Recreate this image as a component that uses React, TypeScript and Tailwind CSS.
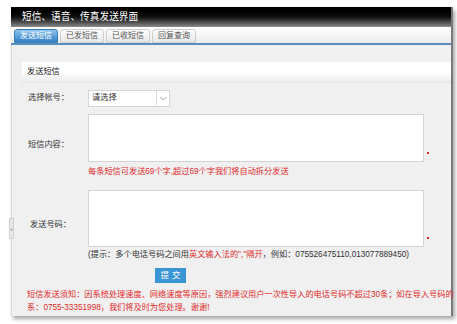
import React from 'react';

const FONT = "font-['Liberation_Sans','Noto_Sans_CJK_SC',sans-serif]";

const tabs = ['发送短信', '已发短信', '已收短信', '回复查询'];

const App: React.FC = () => {
  return (
    <div className={`w-[457px] h-[324px] bg-white pt-[7px] pl-[11px] overflow-hidden ${FONT}`}>
      <div className="relative w-[442px] h-[309px] border-r-2 border-[#7a7a7a] shadow-[2px_3px_4px_rgba(0,0,0,0.35)]">
        {/* Title bar */}
        <div className="h-[20px] bg-gradient-to-b from-black via-[#111] to-[#8c8c8c] text-white text-[9.7px] leading-none flex items-center pl-[11px]">
          短信、语音、传真发送界面
        </div>

        {/* Tabs */}
        <div className="h-[18px] flex items-end gap-[2px] pl-[3px] bg-gradient-to-b from-white to-[#ececec] border-b-2 border-[#5a8ebd]">
          {tabs.map((t, i) => (
            <div
              key={t}
              className={
                i === 0
                  ? 'w-[44px] h-[14px] rounded-t-[3px] bg-gradient-to-b from-[#8cc4ee] to-[#2f7fc4] text-white text-[8px] flex items-center justify-center border border-[#3b7fb8]'
                  : 'w-[44px] h-[14px] rounded-t-[3px] bg-gradient-to-b from-white to-[#e6e6e6] text-[#555] text-[8px] flex items-center justify-center border border-[#cfcfcf]'
              }
            >
              {t}
            </div>
          ))}
        </div>

        {/* Content */}
        <div className="h-[271px] bg-[#f0f0f0] border-l border-[#d8d8d8] pt-[17px] text-[8.2px] text-[#333]">
          <div className="ml-[10px] h-[21px] flex items-center pl-[5px] bg-gradient-to-b from-white via-white to-[#ececec] border-b border-[#e2e2e2] text-[#222]">
            发送短信
          </div>

          {/* 选择帐号 */}
          <div className="mt-[7px] pl-[16px] flex items-center">
            <div className="w-[60px]">选择帐号：</div>
            <div className="w-[82px] h-[17px] flex bg-white border border-[#d6d6d6]">
              <div className="flex-1 flex items-center pl-[3px]">请选择</div>
              <div className="w-[13px] border-l border-[#dcdcdc] flex items-center justify-center">
                <svg width="7" height="5" viewBox="0 0 7 5">
                  <path d="M0.5 1 L3.5 4 L6.5 1" fill="none" stroke="#999" strokeWidth="0.9" />
                </svg>
              </div>
            </div>
          </div>

          {/* 短信内容 */}
          <div className="mt-[7px] pl-[16px] flex items-center">
            <div className="w-[60px]">短信内容：</div>
            <div className="flex flex-col">
              <div className="flex items-end">
                <div className="w-[336px] h-[48px] bg-white border border-[#d4d4d4]" />
                <div className="w-[2px] h-[2px] bg-[#e03030] ml-[3px] mb-[8px]" />
              </div>
              <div className="mt-[5px] h-[10px] leading-[10px] text-[#e02b2b]">
                每条短信可发送69个字,超过69个字我们将自动拆分发送
              </div>
            </div>
          </div>

          {/* 发送号码 */}
          <div className="mt-[13px] pl-[18px] flex items-center">
            <div className="w-[58px]">发送号码：</div>
            <div className="flex flex-col">
              <div className="flex items-end">
                <div className="w-[336px] h-[57px] bg-white border border-[#d4d4d4]" />
                <div className="w-[2px] h-[2px] bg-[#e03030] ml-[3px] mb-[8px]" />
              </div>
              <div className="mt-[3px] h-[10px] leading-[10px] whitespace-nowrap">
                (提示：多个电话号码之间用<span className="text-[#e02b2b]">英文输入法的","隔开</span>，例如：075526475110,013077889450)
              </div>
            </div>
          </div>

          {/* Submit */}
          <div className="mt-[8px] pl-[143px]">
            <button className="w-[31px] h-[15px] bg-[#3a95d5] text-white text-[8.5px] leading-none tracking-[3px] pl-[3px]">
              提交
            </button>
          </div>

          {/* Notice */}
          <div className="mt-[5px] pl-[15px] text-[#e02b2b] leading-[13px]">
            <div className="whitespace-nowrap">
              短信发送须知：因系统处理速度、网络速度等原因，强烈建议用户一次性导入的电话号码不超过30条；如在导入号码的
            </div>
            <div className="whitespace-nowrap">系：0755-33351998，我们将及时为您处理。谢谢!</div>
          </div>
        </div>

        {/* Side handle */}
        <div className="absolute left-[-2px] top-[211px] w-[5px] h-[21px] bg-[#e8e8e8] border border-[#cfcfcf] flex items-center justify-center text-[6px] leading-none text-[#555]">
          ‹
        </div>
      </div>
    </div>
  );
};

export default App;
